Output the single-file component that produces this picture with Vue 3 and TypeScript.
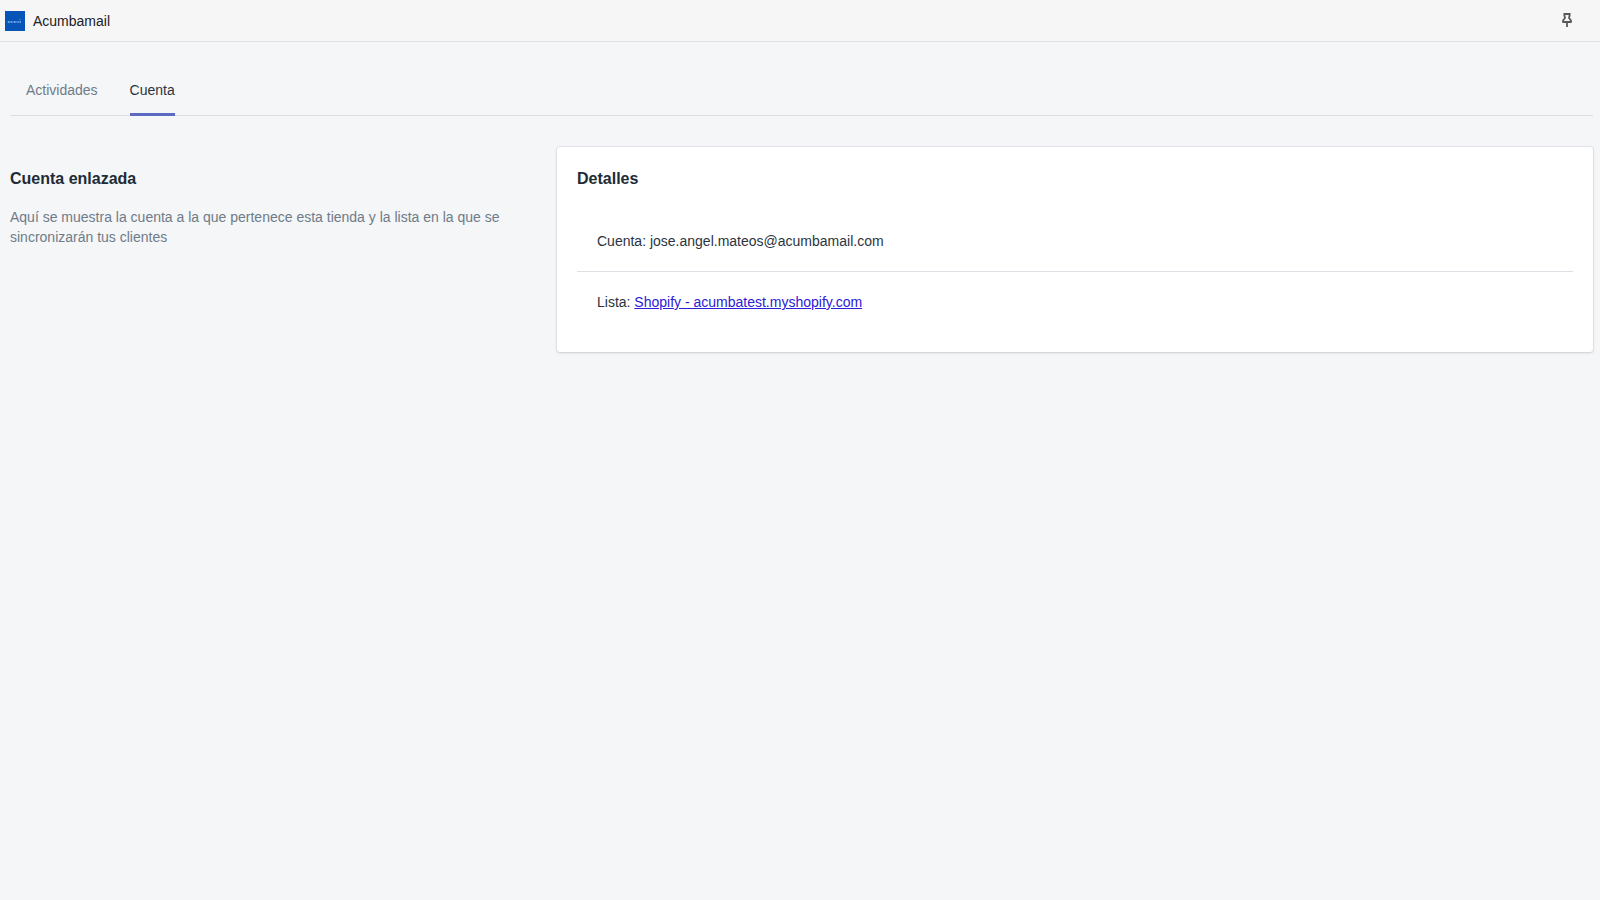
<script setup lang="ts">
import { ref } from 'vue'

const tabs: string[] = ['Actividades', 'Cuenta']
const selected = ref<string>('Cuenta')
</script>

<template>
  <div class="app">
    <header class="topbar">
      <svg class="logo" viewBox="0 0 20 20" aria-hidden="true">
        <rect width="20" height="20" fill="#0654b8" />
        <path d="M2.500 11H16" stroke="#5f97da" stroke-width="1" />
        <path d="M3 11h1.500M6 11h1M9 11h1.500M12.500 11h1M15 11h1" stroke="#a5c8f0" stroke-width="1" />
        <path d="M14 9l2-1" stroke="#4c88d2" stroke-width=".7" />
      </svg>
      <span class="name">Acumbamail</span>
      <button class="pin" type="button" aria-label="Fijar">
        <svg viewBox="0 0 12 17" aria-hidden="true">
          <path d="M2.500 2H9.500M3.200 2.500L4 6L2 8.500V10H10V8.500L8 6L8.800 2.500M6 10V15" fill="none" stroke="#56595c" stroke-width="1.800" stroke-linejoin="round" />
        </svg>
      </button>
    </header>

    <main class="page">
      <nav class="tabs" role="tablist">
        <button
          v-for="tab in tabs"
          :key="tab"
          type="button"
          role="tab"
          class="tab"
          :class="{ active: tab === selected }"
          :aria-selected="tab === selected"
          @click="selected = tab"
        >{{ tab }}</button>
      </nav>

      <div class="section">
        <div class="annotation">
          <h2>Cuenta enlazada</h2>
          <p>Aquí se muestra la cuenta a la que pertenece esta tienda y la lista en la que se sincronizarán tus clientes</p>
        </div>
        <section class="card">
          <h2>Detalles</h2>
          <ul class="items">
            <li>Cuenta: jose.angel.mateos@acumbamail.com</li>
            <li>Lista: <a href="#">Shopify - acumbatest.myshopify.com</a></li>
          </ul>
        </section>
      </div>
    </main>
  </div>
</template>

<style>
body {
  background: #f4f6f8;
}
</style>

<style scoped>
.app {
  min-height: 100vh;
  background: #f4f6f8;
  color: #212b36;
  font: 14px/20px "Liberation Sans", Arial, sans-serif;
}

.topbar {
  display: flex;
  align-items: center;
  height: 41px;
  padding: 0 27px 0 5px;
  background: #f6f6f7;
  border-bottom: 1px solid #dfe3e6;
}

.logo {
  width: 20px;
  height: 20px;
  margin-right: 8px;
}

.name {
  color: #202223;
}

.pin {
  display: flex;
  margin-left: auto;
  padding: 0;
  border: 0;
  background: none;
  cursor: pointer;
}

.pin svg {
  width: 12px;
  height: 17px;
}

.page {
  padding: 24px 7px 20px 10px;
}

.tabs {
  display: flex;
  gap: 32px;
  padding: 0 16px;
  border-bottom: 1px solid #d9dee2;
}

.tab {
  margin-bottom: -1px;
  padding: 14px 0 13px;
  border: 0;
  border-bottom: 3px solid transparent;
  background: none;
  color: #6f7b87;
  font: inherit;
  cursor: pointer;
}

.tab.active {
  color: #2b343e;
  border-bottom-color: #5c6ac4;
}

.section {
  display: grid;
  grid-template-columns: 527fr 1036fr;
  gap: 20px;
  margin-top: 31px;
}

h2 {
  margin: 0;
  font-size: 16px;
  line-height: 24px;
  font-weight: 700;
}

.annotation {
  padding: 20px 20px 0 0;
}

.annotation p {
  margin: 16px 0 0;
  color: #6f7b87;
}

.card {
  padding: 20px;
  background: #fff;
  border-radius: 3px;
  box-shadow: 0 0 0 1px rgba(63, 63, 68, 0.07), 0 1px 3px rgba(63, 63, 68, 0.15);
}

.items {
  margin: 20px 0 0;
  padding: 0;
  list-style: none;
}

.items li {
  padding: 20px;
  color: #2b343e;
}

.items li + li {
  border-top: 1px solid #dcdfe3;
}

.items a {
  color: #2a20d8;
}
</style>
